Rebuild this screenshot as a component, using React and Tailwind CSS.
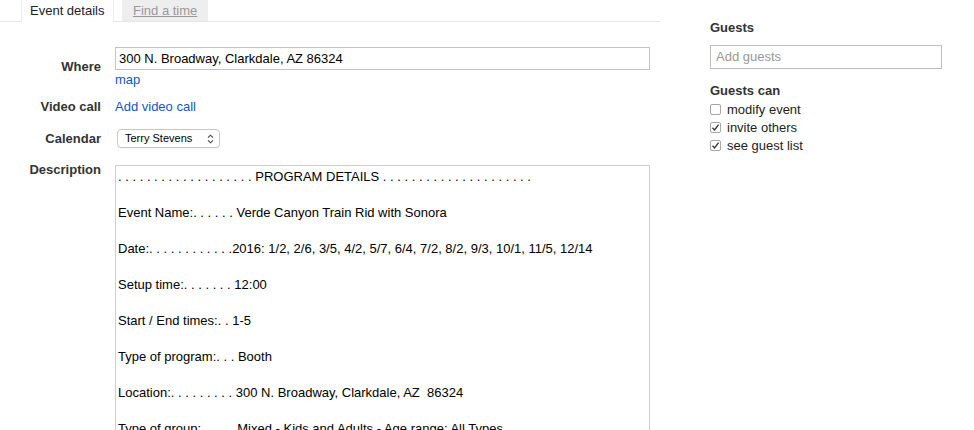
import React from "react";

const lines = [
  ". . . . . . . . . . . . . . . . . . . PROGRAM DETAILS . . . . . . . . . . . . . . . . . . . . .",
  "",
  "Event Name:. . . . . . Verde Canyon Train Rid with Sonora",
  "",
  "Date:. . . . . . . . . . . .2016: 1/2, 2/6, 3/5, 4/2, 5/7, 6/4, 7/2, 8/2, 9/3, 10/1, 11/5, 12/14",
  "",
  "Setup time:. . . . . . . 12:00",
  "",
  "Start / End times:. . 1-5",
  "",
  "Type of program:. . . Booth",
  "",
  "Location:. . . . . . . . . 300 N. Broadway, Clarkdale, AZ  86324",
  "",
  "Type of group:. . . . . Mixed - Kids and Adults - Age range: All Types",
];

function Check({ checked, label }) {
  return (
    <div className="flex items-center h-[18px]">
      <span className="w-[11px] h-[11px] rounded-[2px] border border-[#a6a6a6] bg-white flex items-center justify-center">
        {checked && (
          <svg width="9" height="9" viewBox="0 0 9 9">
            <path d="M1.5 4.8 L3.6 7 L7.6 1.6" fill="none" stroke="#333" strokeWidth="1.3" />
          </svg>
        )}
      </span>
      <span className="ml-[6px] leading-[15px]">{label}</span>
    </div>
  );
}

export default function App() {
  return (
    <div className="h-[430px] w-[974px] overflow-hidden bg-white font-['Liberation_Sans',Arial,sans-serif] text-[13px] text-[#222] flex">
      <div className="w-[660px] flex flex-col">
        <div className="h-[22px] border-b border-[#e5e5e5] flex pl-[21px]">
          <div className="w-[93px] h-[22px] bg-white border-x border-[#ececec] -mb-px pl-[8px] leading-[22px] text-[#222]">
            Event details
          </div>
          <div className="ml-[8px] w-[86px] h-[21px] bg-[#eeeeee] pl-[11px] leading-[22px] text-[#999] underline">
            Find a time
          </div>
        </div>

        <div className="mt-[25px] flex items-center">
          <div className="w-[101px] text-right font-bold text-[#333] leading-[15px] -mt-[2px]">Where</div>
          <div className="ml-[14px] flex flex-col">
            <div className="w-[535px] h-[23px] border border-[#c4c4c4] pl-[3px] leading-[21px] text-black">
              300 N. Broadway, Clarkdale, AZ 86324
            </div>
            <span className="mt-[2px] leading-[15px] text-[#1155cc]">map</span>
          </div>
        </div>

        <div className="mt-[12px] flex items-center">
          <div className="w-[101px] text-right font-bold text-[#333] leading-[15px]">Video call</div>
          <span className="ml-[14px] leading-[15px] text-[#1155cc]">Add video call</span>
        </div>

        <div className="mt-[15px] flex items-center">
          <div className="w-[101px] text-right font-bold text-[#333] leading-[15px]">Calendar</div>
          <div className="ml-[16px] w-[103px] h-[19px] rounded-[4px] border border-[#c6c6c6] bg-white flex items-center pl-[7px] pr-[5px] text-[11px] text-black shadow-[0_1px_0_rgba(0,0,0,0.04)]">
            <span className="flex-1">Terry Stevens</span>
            <svg width="7" height="10" viewBox="0 0 7 10">
              <path d="M1 3.6 L3.5 1.2 L6 3.6 M1 6.4 L3.5 8.8 L6 6.4" fill="none" stroke="#444" strokeWidth="1.1" />
            </svg>
          </div>
        </div>

        <div className="mt-[14px] flex items-start">
          <div className="w-[101px] text-right font-bold text-[#333] leading-[15px]">Description</div>
          <div className="ml-[14px] mt-[3px] w-[535px] h-[300px] border border-[#cfcfcf] pl-[2px] pt-[2px] text-black leading-[18px] whitespace-pre overflow-hidden">
            {lines.map((l, i) => (
              <div key={i} className="h-[18px]">{l}</div>
            ))}
          </div>
        </div>
      </div>

      <div className="ml-[50px] w-[232px] pt-[20px] flex flex-col">
        <div className="font-bold text-[#333] leading-[15px]">Guests</div>
        <div className="mt-[10px] w-[232px] h-[24px] border border-[#bdbdbd] pl-[5px] leading-[22px] text-[#999]">
          Add guests
        </div>
        <div className="mt-[14px] font-bold text-[#333] leading-[15px]">Guests can</div>
        <div className="mt-[2px] flex flex-col">
          <Check checked={false} label="modify event" />
          <Check checked={true} label="invite others" />
          <Check checked={true} label="see guest list" />
        </div>
      </div>
    </div>
  );
}
